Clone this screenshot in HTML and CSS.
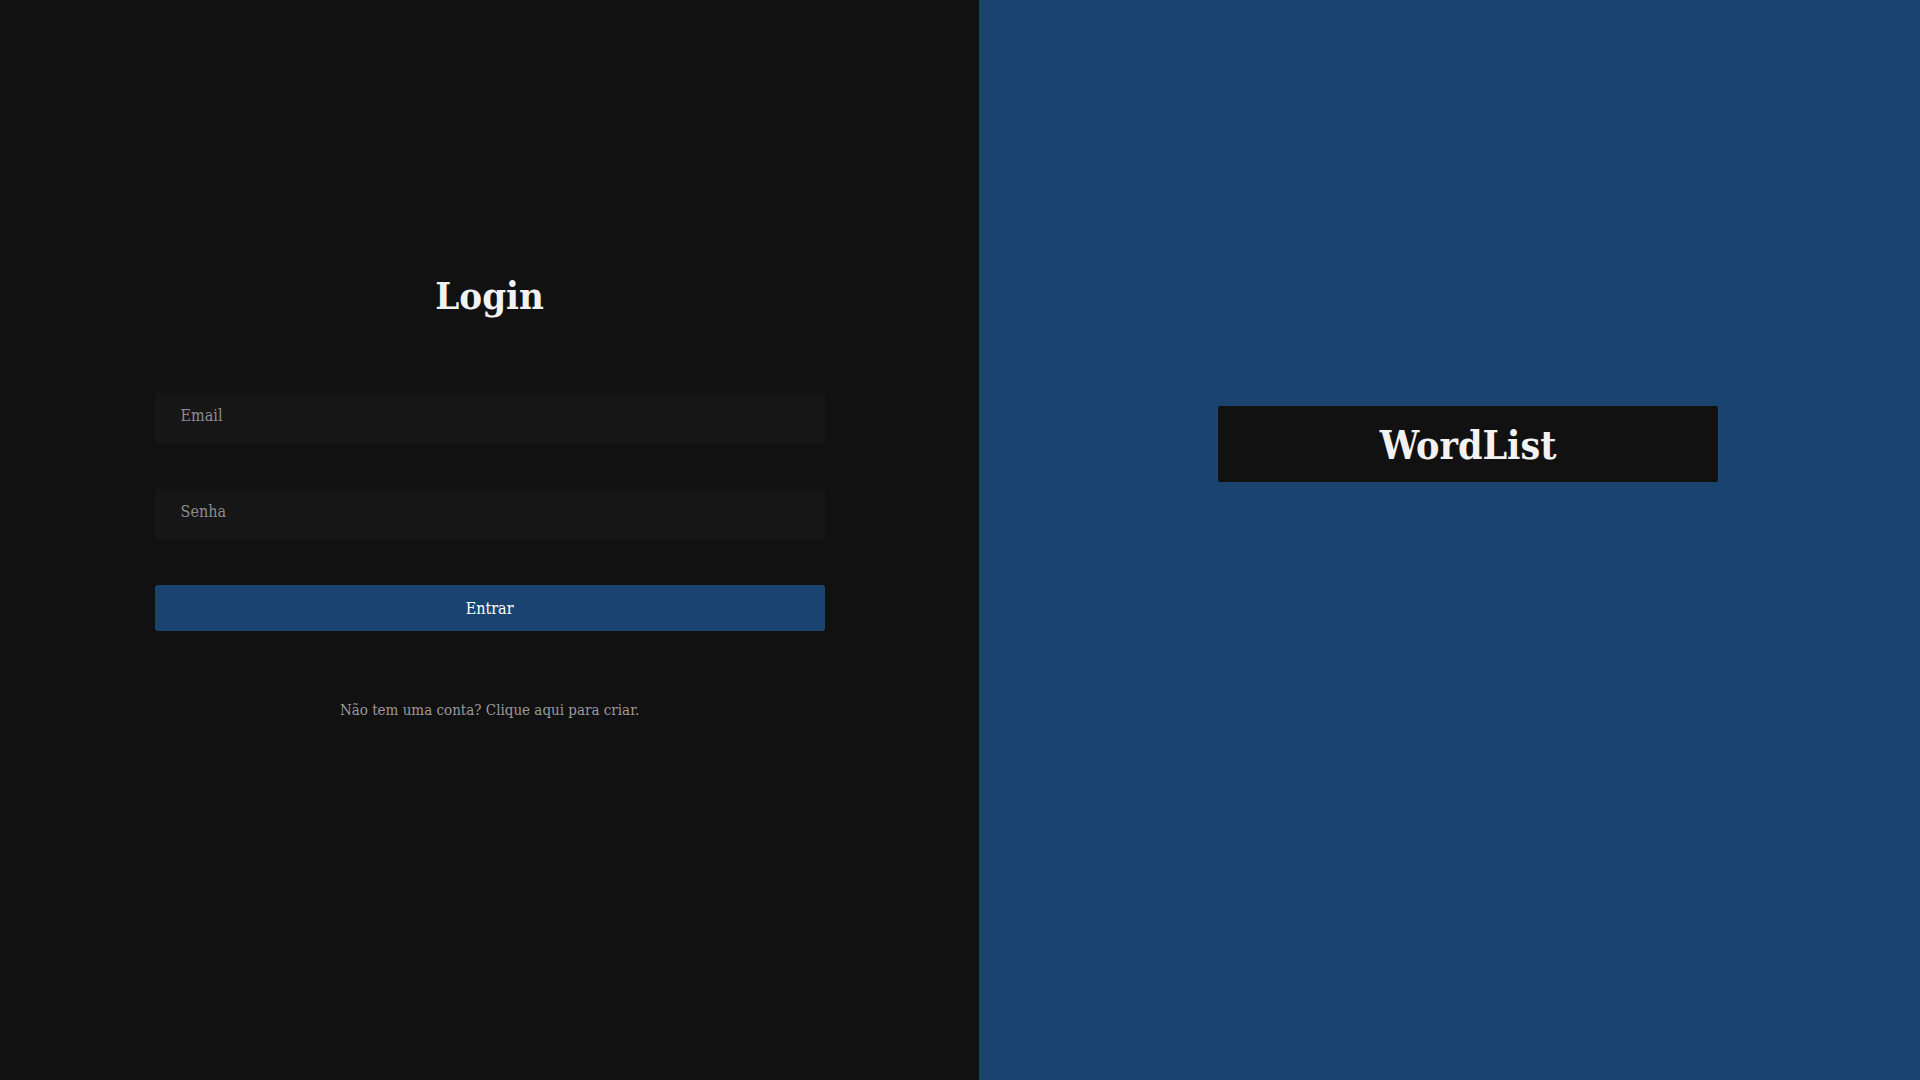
FILE: index.html
```html
<!DOCTYPE html>
<html lang="pt-BR">
<head>
<meta charset="utf-8">
<title>WordList - Login</title>
<link rel="stylesheet" href="styles.css">
</head>
<body>
<main class="page">
  <section class="left">
    <h1 class="title">Login</h1>
    <form class="form">
      <input class="field" type="email" placeholder="Email">
      <input class="field" type="password" placeholder="Senha">
      <button class="btn" type="button">Entrar</button>
    </form>
    <p class="signup">Não tem uma conta? Clique aqui para criar.</p>
  </section>
  <section class="right">
    <div class="brand">WordList</div>
  </section>
</main>
</body>
</html>
```
FILE: styles.css
```css
* { box-sizing: border-box; }
html, body { margin: 0; padding: 0; height: 100%; }
body {
  font-family: "DejaVu Serif", "Liberation Serif", serif;
  font-stretch: condensed;
  background: #111111;
}
.page {
  display: flex;
  height: 100vh;
}
.left {
  width: 51%;
  background: #111111;
  display: flex;
  flex-direction: column;
  align-items: center;
  padding-top: 272px;
}
.title {
  margin: 0;
  font-size: 38px;
  line-height: 48px;
  font-weight: bold;
  color: #f2f2f2;
}
.form {
  width: 670px;
  margin-top: 73px;
  display: flex;
  flex-direction: column;
  gap: 46px;
}
.field {
  height: 50px;
  border: none;
  outline: none;
  background: #161616;
  border-radius: 2px;
  padding: 0 26px 6px;
  font-family: inherit;
  font-stretch: condensed;
  font-size: 16px;
  color: #cccccc;
}
.field::placeholder { color: #8c8c8c; }
.btn {
  height: 46px;
  border: none;
  border-radius: 3px;
  background: #1a446f;
  color: #ffffff;
  font-family: inherit;
  font-stretch: condensed;
  font-size: 16px;
  padding: 0;
}
.signup {
  margin: 69px 0 0;
  font-size: 15px;
  line-height: 20px;
  color: #9a9a9a;
}
.right {
  flex: 1;
  background: #1a446f;
  display: flex;
  justify-content: center;
  align-items: flex-start;
  padding: 406px 0 0 37px;
}
.brand {
  width: 500px;
  height: 76px;
  background: #111111;
  border-radius: 2px;
  display: flex;
  align-items: center;
  justify-content: center;
  font-size: 39px;
  font-weight: bold;
  color: #f2f2f2;
  padding-top: 2px;
}
```
